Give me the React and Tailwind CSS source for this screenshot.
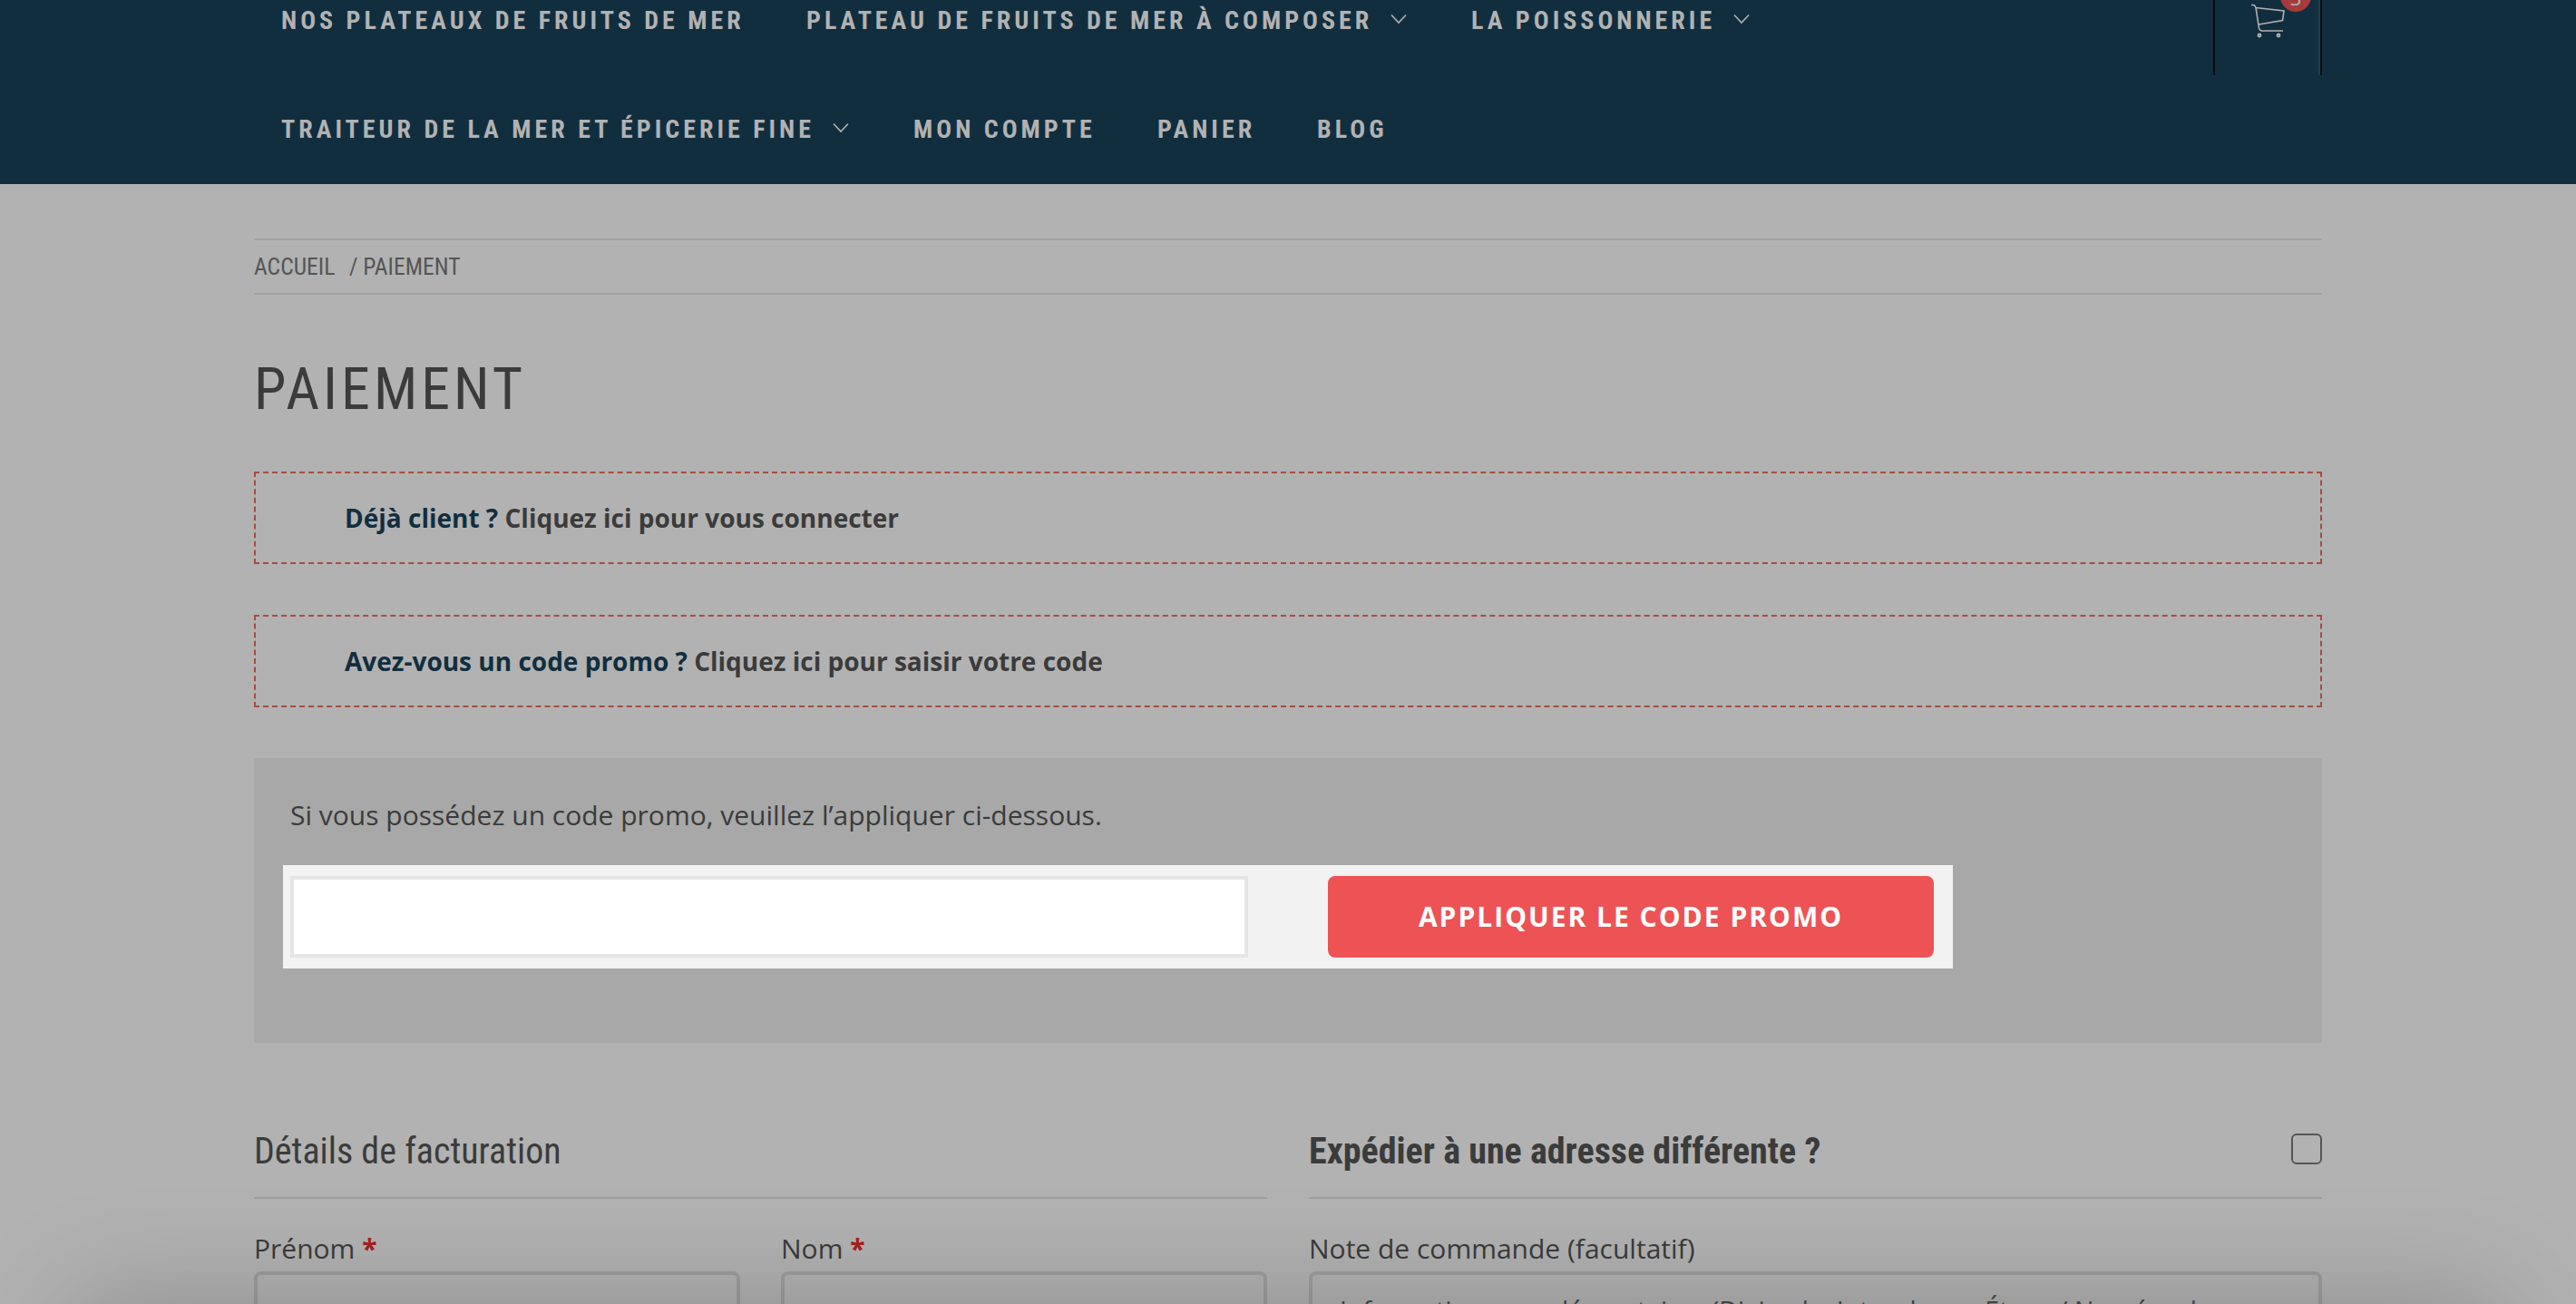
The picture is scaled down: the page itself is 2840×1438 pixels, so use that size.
import React from "react";

const RC = "font-['Roboto_Condensed','Roboto',sans-serif] [font-stretch:75%]";

function Chevron() {
  return (
    <svg width="18" height="12" viewBox="0 0 18 12" fill="none" stroke="#b2b2b2" strokeWidth="1.6" className="ml-5 -mt-1">
      <path d="M1 1.5 L9 10 L17 1.5" />
    </svg>
  );
}

function NavItem({ children, menu, w }) {
  return (
    <a className="flex items-center whitespace-nowrap" style={{ width: w }}>
      <span>{children}</span>
      {menu && <Chevron />}
    </a>
  );
}

function Notice({ q, children }) {
  return (
    <div className="h-[102px] border-2 border-dashed border-[#a44e3d] pl-[98px] leading-[98px] text-[28px] font-bold text-[#3b3b3b]">
      <span className="text-[#112e3f]">{q}</span> <span>{children}</span>
    </div>
  );
}

function Field({ label }) {
  return (
    <div className="w-[536px]">
      <div className="text-[30px] leading-[50px] h-[50px]">
        {label} <b className="text-[#a9211a]">*</b>
      </div>
      <div className="h-[90px] rounded-lg border-4 border-[#9e9e9e]" />
    </div>
  );
}

export default function App() {
  return (
    <div className="relative h-[1438px] w-[2840px] overflow-hidden bg-[#b2b2b2] font-['Open_Sans',sans-serif] text-[#3b3b3b]">
      <header className="h-[203px] overflow-hidden bg-[#112e3f]">
        <div className="mx-auto flex w-[2280px] justify-between">
          <nav className={`${RC} pl-[30px] text-[28px] font-bold tracking-[4px] text-[#b2b2b2]`}>
            <div className="-mt-[37px] flex h-[120px] items-center">
              <NavItem w="579px">NOS PLATEAUX DE FRUITS DE MER</NavItem>
              <NavItem w="733px" menu>PLATEAU DE FRUITS DE MER À COMPOSER</NavItem>
              <NavItem menu>LA POISSONNERIE</NavItem>
            </div>
            <div className="flex h-[120px] items-center">
              <NavItem w="697px" menu>TRAITEUR DE LA MER ET ÉPICERIE FINE</NavItem>
              <NavItem w="269px">MON COMPTE</NavItem>
              <NavItem w="176px">PANIER</NavItem>
              <NavItem>BLOG</NavItem>
            </div>
          </nav>
          <div className="relative h-[83px] w-[120px] border-x-2 border-[#0b0d0f]">
            <div className="absolute right-0 top-0 h-full w-[2px] bg-[#233c4b]" />
            <svg width="38" height="38" viewBox="0 0 38 38" className="absolute left-[39px] top-[4px]" fill="none" stroke="#b2b2b2" strokeWidth="1.6">
              <path d="M1 1.5 H3.5 Q5.5 2 6 4.5 L9.5 27 Q10 30 13 30 H36 M6 4.5 L37 8 L35.5 18.5 L9 23" />
              <circle cx="10" cy="35" r="1.5" strokeWidth="1.8" />
              <circle cx="31" cy="35" r="1.5" strokeWidth="1.8" />
            </svg>
            <div className="absolute left-[72px] -top-[21px] h-[34px] w-[34px] rounded-full bg-[#a63b3b] text-center text-[22px] leading-[36px] text-[#b2b2b2]">3</div>
          </div>
        </div>
      </header>

      <main className="mx-auto w-[2280px]">
        <div className={`${RC} mt-[60px] flex h-[62px] items-center whitespace-pre border-y-2 border-[#a2a2a2] pt-px text-[25.6px] text-[#555]`}>
          <span className="w-[105px]">ACCUEIL</span>
          <span>/ PAIEMENT</span>
        </div>
        <h1 className={`${RC} mt-[57px] h-[95px] text-[64px] leading-[96px] tracking-[4px]`}>PAIEMENT</h1>
        <div className="mt-[43px] flex flex-col gap-[56px]">
          <Notice q="Déjà client ?">Cliquez ici pour vous connecter</Notice>
          <Notice q="Avez-vous un code promo ?">Cliquez ici pour saisir votre code</Notice>
        </div>

        <section className="mt-[56px] h-[314px] bg-[#a8a8a8] px-8 pt-[38px]">
          <p className="h-[80px] pl-2 text-[30px] leading-[50px]">Si vous possédez un code promo, veuillez l’appliquer ci-dessous.</p>
          <div className="flex h-[114px] w-[1841px] items-center bg-[#f2f2f2] pl-2">
            <div className="h-[90px] w-[1056px] border-4 border-[#e5e5e5] bg-white" />
            <button className="ml-[88px] h-[90px] w-[668px] rounded-lg bg-[#ed5355] pb-0.5 text-[30px] font-bold tracking-[2px] text-white">APPLIQUER LE CODE PROMO</button>
          </div>
        </section>

        <div className="mt-[70px] flex gap-[46px]">
          <section className="w-[1117px]">
            <h2 className={`${RC} h-[102px] border-b-2 border-[#9e9e9e] text-[40px] leading-[100px]`}>Détails de facturation</h2>
            <div className="mt-[30px] flex justify-between">
              <Field label="Prénom" />
              <Field label="Nom" />
            </div>
          </section>
          <section className="w-[1117px]">
            <div className="flex h-[102px] justify-between border-b-2 border-[#9e9e9e]">
              <h2 className={`${RC} text-[40px] font-bold leading-[100px]`}>Expédier à une adresse différente ?</h2>
              <span className="mt-[30px] h-[34px] w-[34px] rounded-md border-2 border-[#555]" />
            </div>
            <div className="mt-[30px] h-[50px] text-[30px] leading-[50px]">Note de commande (facultatif)</div>
            <div className="h-[200px] rounded-lg border-4 border-[#9e9e9e] pl-[30px] pt-[14px] text-[28.5px] leading-[50px] text-[#4a4a4a]">
              Informations supplémentaires (Digicode, Interphone, Étage / Numéro de
            </div>
          </section>
        </div>
      </main>
      <div className="pointer-events-none absolute inset-x-[80px] top-[1438px] h-[400px] shadow-[0_0_120px_rgba(0,0,0,0.22)]" />
    </div>
  );
}
